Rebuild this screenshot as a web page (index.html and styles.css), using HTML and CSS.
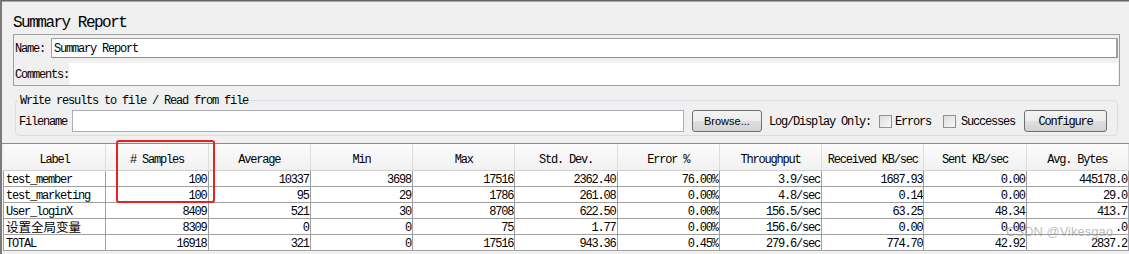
FILE: index.html
```html
<!DOCTYPE html>
<html lang="en">
  <head>
    <meta charset="UTF-8" />
    <meta name="viewport" content="width=device-width, initial-scale=1.0" />
    <title>Summary Report</title>
    <link rel="stylesheet" href="styles.css">
  </head>
  <body>
    <div class="frame">
      <div class="panel">
        <div class="title">Summary Report</div>

        <div class="namebox">
          <div class="row">
            <span class="lbl lblName">Name:</span>
            <div class="field nameField">Summary Report</div>
          </div>
          <div class="row rowComments">
            <span class="lbl lblComments">Comments:</span>
            <div class="comments"></div>
          </div>
        </div>

        <fieldset class="filebox">
          <legend>Write results to file / Read from file</legend>
          <div class="filerow">
            <span class="fileLbl">Filename</span>
            <div class="field fileField"></div>
            <button class="btn browse">Browse...</button>
            <span class="logLbl">Log/Display Only:</span>
            <span class="box boxErrors"></span><span class="txt">Errors</span>
            <span class="box boxSuccess"></span><span class="txt">Successes</span>
            <button class="btn configure">Configure</button>
          </div>
        </fieldset>
      </div>

      <div class="tablewrap">
        <table class="report">
          <thead>
            <tr>
              <th>Label</th>
              <th># Samples</th>
              <th>Average</th>
              <th>Min</th>
              <th>Max</th>
              <th>Std. Dev.</th>
              <th>Error %</th>
              <th>Throughput</th>
              <th>Received KB/sec</th>
              <th>Sent KB/sec</th>
              <th>Avg. Bytes</th>
            </tr>
          </thead>
          <tbody>
            <tr>
              <td>test_member</td><td>100</td><td>10337</td><td>3698</td><td>17516</td><td>2362.40</td><td>76.00%</td><td>3.9/sec</td><td>1687.93</td><td>0.00</td><td>445178.0</td>
            </tr>
            <tr>
              <td>test_marketing</td><td>100</td><td>95</td><td>29</td><td>1786</td><td>261.08</td><td>0.00%</td><td>4.8/sec</td><td>0.14</td><td>0.00</td><td>29.0</td>
            </tr>
            <tr>
              <td>User_loginX</td><td>8409</td><td>521</td><td>30</td><td>8708</td><td>622.50</td><td>0.00%</td><td>156.5/sec</td><td>63.25</td><td>48.34</td><td>413.7</td>
            </tr>
            <tr>
              <td class="cjk">设置全局变量</td><td>8309</td><td>0</td><td>0</td><td>75</td><td>1.77</td><td>0.00%</td><td>156.6/sec</td><td>0.00</td><td>0.00</td><td>.0</td>
            </tr>
            <tr>
              <td>TOTAL</td><td>16918</td><td>321</td><td>0</td><td>17516</td><td>943.36</td><td>0.45%</td><td>279.6/sec</td><td>774.70</td><td>42.92</td><td>2837.2</td>
            </tr>
          </tbody>
        </table>
      </div>
    </div>

    <!-- annotation and watermark sit on top of the screenshot -->
    <div class="mark"></div>
    <div class="watermark">CSDN @Vikesgao</div>
  </body>
</html>
```

FILE: styles.css
```css
html,
body {
  margin: 0;
  height: 254px;
  overflow: hidden;
}
body {
  background: #f0f0f0;
  color: #000;
  font-family: "Liberation Mono", monospace;
  font-size: 12px;
  letter-spacing: -1.2px;
  position: relative;
}
.frame {
  border-top: 1px solid #666;
  border-left: 2px solid #7a7a7a;
  box-shadow: inset 0 1px #a8a8a8;
  height: 253px;
}
.panel {
  padding: 0 9px 0 11px;
}
.title {
  padding-top: 13px;
  height: 18px;
  line-height: 18px;
  font-size: 16px;
  letter-spacing: -1.5px;
}

/* name / comments */
.namebox {
  margin-top: 2px;
  border: 1px solid #a0a0a0;
  padding: 3px 1px 0 1px;
}
.row {
  display: flex;
  align-items: center;
  height: 20px;
}
.rowComments {
  margin-top: 5px;
  height: 22px;
}
.lbl {
  padding-top: 2px;
}
.lblName {
  width: 36px;
}
.lblComments {
  width: 54px;
}
.field {
  box-sizing: border-box;
  background: #fff;
  border: 1px solid #a0a0a0;
}
.nameField {
  flex: 1;
  height: 20px;
  line-height: 18px;
  padding: 1px 0 0 2px;
  border-right: 2px solid #a0a0a0;
  border-bottom-color: #8c8c8c;
}
.comments {
  flex: 1;
  height: 22px;
  background: #fff;
}

/* file panel */
.filebox {
  margin: 7px 2px 0 2px;
  padding: 3px 10px 3px 3px;
  border: 1px solid #d5dfe5;
  border-radius: 4px;
}
.filebox legend {
  padding: 2px 2px 0 2px;
  margin-left: -1px;
  line-height: 12px;
}
.filerow {
  display: flex;
  align-items: center;
  height: 22px;
}
.fileLbl,
.logLbl,
.txt {
  padding-top: 2px;
}
.fileLbl {
  margin-right: 5px;
}
.fileField {
  flex: 1;
  height: 22px;
  border-color: #abadb3;
}
.btn {
  box-sizing: border-box;
  height: 22px;
  border: 1px solid #707070;
  border-radius: 3px;
  background: linear-gradient(#f4f4f4 0%, #ececec 48%, #dedede 52%, #d2d2d2 100%);
  color: #000;
  padding: 0;
}
.browse {
  margin-left: 8px;
  width: 70px;
  font-family: "Liberation Sans", Arial, sans-serif;
  font-size: 11px;
  letter-spacing: 0;
}
.configure {
  margin-left: 9px;
  width: 83px;
  padding-top: 2px;
  font-family: "Liberation Mono", monospace;
  font-size: 12px;
  letter-spacing: -1.2px;
}
.logLbl {
  margin-left: 7px;
}
.box {
  box-sizing: border-box;
  width: 13px;
  height: 13px;
  border: 1px solid #8e8f8f;
  background: linear-gradient(135deg, #dcdcdc, #f8f8f8);
  margin-right: 3px;
}
.boxErrors {
  margin-left: 8px;
}
.boxSuccess {
  margin-left: 12px;
  margin-right: 5px;
}

/* results table */
.tablewrap {
  margin-top: 7px;
  border-top: 1px solid #8a8a8a;
}
.report {
  margin-left: 1px;
  width: 1126px;
  table-layout: fixed;
  border-collapse: collapse;
}
.report th {
  height: 21px;
  padding: 5px 0 0 0;
  font-weight: normal;
  text-align: center;
  background: linear-gradient(#fbfbfb, #f1f1f1);
  border-right: 1px solid #dedede;
  border-bottom: 1px solid #d0d0d0;
  white-space: nowrap;
  overflow: hidden;
}
.report td {
  height: 12px;
  line-height: 12px;
  padding: 3px 1px 0 1px;
  text-align: right;
  border: 1px solid #a0a0a0;
  background: #fff;
  white-space: nowrap;
  overflow: hidden;
}
.report td:first-child {
  text-align: left;
  padding-left: 2px;
}
.report td.cjk {
  font-family: "Noto Sans CJK SC", sans-serif;
  font-size: 12.5px;
  letter-spacing: 0;
  padding-top: 1px;
  height: 14px;
  line-height: 14px;
}

.mark {
  position: absolute;
  left: 116px;
  top: 140px;
  width: 99px;
  height: 63px;
  box-sizing: border-box;
  border: 2px solid #e8231d;
  border-radius: 3px;
}
.watermark {
  position: absolute;
  left: 1006px;
  top: 224px;
  font-family: "Liberation Sans", Arial, sans-serif;
  font-size: 13px;
  letter-spacing: 0;
  color: rgba(130, 130, 130, 0.55);
}
```
